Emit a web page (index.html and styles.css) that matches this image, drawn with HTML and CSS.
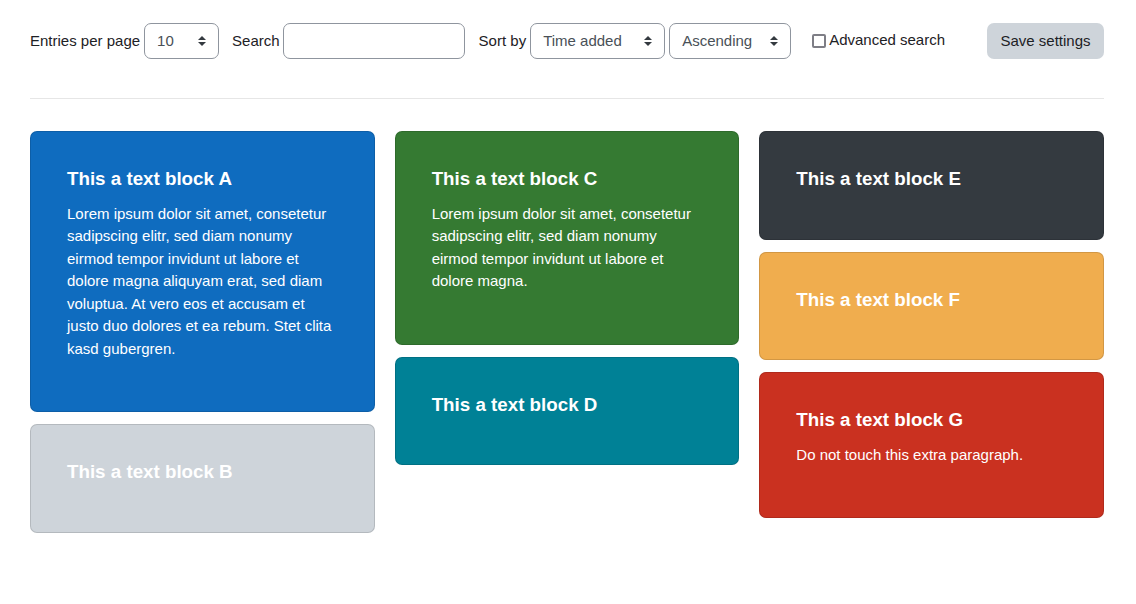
FILE: index.html
```html
<!DOCTYPE html>
<html lang="en">
<head>
<meta charset="utf-8">
<title>Text blocks</title>
<link rel="stylesheet" href="styles.css">
</head>
<body>
<div class="page">
  <form class="toolbar">
    <label class="lbl">Entries per page</label>
    <div class="select sel-entries"><span>10</span><svg class="caret" width="8" height="10" viewBox="0 0 8 10"><path d="M4 0 L8 4 H0 Z M0 6 H8 L4 10 Z" fill="#343a40"/></svg></div>
    <label class="lbl lbl-search">Search</label>
    <div class="input"></div>
    <label class="lbl lbl-sort">Sort by</label>
    <div class="select sel-time"><span>Time added</span><svg class="caret" width="8" height="10" viewBox="0 0 8 10"><path d="M4 0 L8 4 H0 Z M0 6 H8 L4 10 Z" fill="#343a40"/></svg></div>
    <div class="select sel-order"><span>Ascending</span><svg class="caret" width="8" height="10" viewBox="0 0 8 10"><path d="M4 0 L8 4 H0 Z M0 6 H8 L4 10 Z" fill="#343a40"/></svg></div>
    <label class="check"><span class="box"></span>Advanced search</label>
    <div class="btn">Save settings</div>
  </form>
  <hr class="divider">
  <div class="grid">
    <div class="col">
      <div class="card bg-primary">
        <h5>This a text block A</h5>
        <p>Lorem ipsum dolor sit amet, consetetur sadipscing elitr, sed diam nonumy eirmod tempor invidunt ut labore et dolore magna aliquyam erat, sed diam voluptua. At vero eos et accusam et justo duo dolores et ea rebum. Stet clita kasd gubergren.</p>
      </div>
      <div class="card bg-secondary">
        <h5>This a text block B</h5>
      </div>
    </div>
    <div class="col">
      <div class="card bg-success">
        <h5>This a text block C</h5>
        <p>Lorem ipsum dolor sit amet, consetetur sadipscing elitr, sed diam nonumy eirmod tempor invidunt ut labore et dolore magna.</p>
      </div>
      <div class="card bg-info">
        <h5>This a text block D</h5>
      </div>
    </div>
    <div class="col">
      <div class="card bg-dark">
        <h5>This a text block E</h5>
      </div>
      <div class="card bg-warning">
        <h5>This a text block F</h5>
      </div>
      <div class="card bg-danger">
        <h5>This a text block G</h5>
        <p>Do not touch this extra paragraph.</p>
      </div>
    </div>
  </div>
</div>
</body>
</html>
```
FILE: styles.css
```css
* { box-sizing: border-box; }
html, body { margin: 0; padding: 0; background: #fff; }
body {
  font-family: "Liberation Sans", Arial, sans-serif;
  font-size: 15px;
  line-height: 1.5;
  color: #1d2125;
}
.page { padding: 23px 32px 0 30px; }

.toolbar {
  display: flex;
  align-items: center;
  height: 36px;
  margin: 0;
}
.lbl { margin-right: 4px; white-space: nowrap; }
.lbl-search { margin-left: 13px; margin-right: 3px; }
.lbl-sort { margin-left: 14px; }

.select, .input {
  height: 36px;
  border: 1px solid #8f959e;
  border-radius: 7px;
  background: #fff;
  color: #495057;
}
.select {
  display: flex;
  align-items: center;
  justify-content: space-between;
  padding: 0 12px 0 12px;
}
.caret { display: block; }
.sel-entries { width: 75px; }
.sel-time { width: 135px; }
.sel-order { width: 122px; margin-left: 4px; }
.input { width: 182px; }

.check {
  display: flex;
  align-items: center;
  margin-left: 21px;
  margin-top: -1px;
}
.box {
  flex: 0 0 14px;
  width: 14px;
  height: 14px;
  border: 2px solid #7e7e86;
  border-radius: 2px;
  margin-right: 3px;
  background: #fff;
}
.btn {
  margin-left: auto;
  width: 117px;
  height: 36px;
  display: flex;
  align-items: center;
  justify-content: center;
  background: #ced4da;
  border-radius: 7px;
  color: #1d2125;
}

.divider {
  border: 0;
  border-top: 1px solid #e6e6e6;
  margin: 39px 0 32px 0;
}

.grid {
  display: grid;
  grid-template-columns: 1fr 1fr 1fr;
  column-gap: 20px;
  align-items: start;
}
.col { display: flex; flex-direction: column; gap: 12px; }

.card {
  border: 1px solid rgba(0, 0, 0, 0.125);
  border-radius: 7px;
  padding: 36px;
  color: #fff;
}
.card h5 {
  margin: 0 0 12px 0;
  font-size: 18.75px;
  line-height: 1.2;
  font-weight: 700;
}
.card p { margin: 0 0 15px 0; padding-right: 4px; }

.bg-primary { background: #0f6cbf; }
.bg-secondary { background: #ced4da; }
.bg-success { background: #357a32; }
.bg-info { background: #008196; }
.bg-dark { background: #343a40; }
.bg-warning { background: #f0ad4e; }
.bg-danger { background: #ca3120; }
```
